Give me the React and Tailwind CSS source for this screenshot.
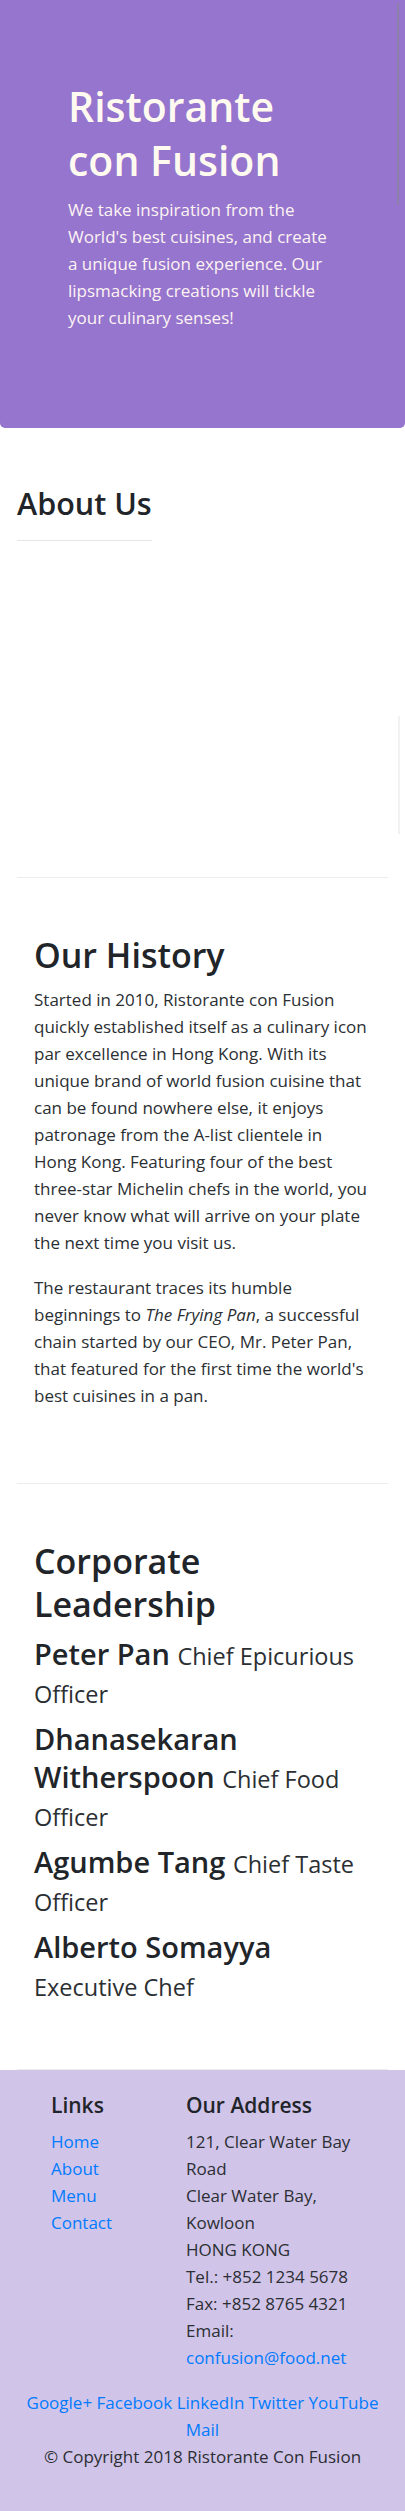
const leaders = [
  { name: 'Peter Pan', title: 'Chief Epicurious Officer' },
  { name: 'Dhanasekaran Witherspoon', title: 'Chief Food Officer' },
  { name: 'Agumbe Tang', title: 'Chief Taste Officer' },
  { name: 'Alberto Somayya', title: 'Executive Chef' },
];

export default function App() {
  return (
    <div className="bg-white text-[#212529]" style={{ fontFamily: '"Open Sans", sans-serif' }}>
      {/* Jumbotron */}
      <div className="relative bg-[#9575cd] rounded-b-[5px] px-[68px] pt-[79px] pb-[79px] text-[#fffaf0]">
        <h1 className="text-[41px] leading-[54px] font-semibold mb-[9px]">Ristorante con Fusion</h1>
        <p className="text-[17px] leading-[27px] mb-[18px] text-[#fdf3f3]">
          We take inspiration from the World's best cuisines, and create a unique fusion experience. Our lipsmacking creations will tickle your culinary senses!
        </p>
        <div className="absolute right-[6px] top-[3px] h-[202px] w-[2px] bg-[#8c80a8]" />
      </div>

      <div className="px-[17px]">
        {/* About Us row */}
        <div className="relative min-h-[450px] pt-[56px] pb-[56px] border-b border-[#ececec]">
          <div className="w-fit">
            <h3 className="text-[30.5px] leading-[38px] font-semibold mb-[18px] whitespace-nowrap">About Us</h3>
            <hr className="border-t border-[#e6e6e6]" />
          </div>
          <div className="absolute right-[-12px] top-[288px] h-[118px] w-[2px] bg-[#f2f2f2]" />
        </div>

        {/* Our History */}
        <div className="pt-[56px] pb-[56px] px-[17px] border-b border-[#ececec]">
          <h2 className="text-[34px] leading-[43px] font-semibold mb-[9px]">Our History</h2>
          <p className="text-[17px] leading-[27px] mb-[18px] text-[#2b2f33] whitespace-nowrap">
            Started in 2010, Ristorante con Fusion<br />
            quickly established itself as a culinary icon<br />
            par excellence in Hong Kong. With its<br />
            unique brand of world fusion cuisine that<br />
            can be found nowhere else, it enjoys<br />
            patronage from the A-list clientele in<br />
            Hong Kong. Featuring four of the best<br />
            three-star Michelin chefs in the world, you<br />
            never know what will arrive on your plate<br />
            the next time you visit us.
          </p>
          <p className="text-[17px] leading-[27px] mb-[18px] text-[#2b2f33] whitespace-nowrap">
            The restaurant traces its humble<br />
            beginnings to <em>The Frying Pan</em>, a successful<br />
            chain started by our CEO, Mr. Peter Pan,<br />
            that featured for the first time the world's<br />
            best cuisines in a pan.
          </p>
        </div>

        {/* Corporate Leadership */}
        <div className="pt-[56px] pb-[56px] px-[17px] border-b border-[#ececec]">
          <h2 className="text-[34px] leading-[43px] font-semibold mb-[9px]">Corporate Leadership</h2>
          {leaders.map((l) => (
            <h3 key={l.name} className="text-[29px] leading-[38px] font-semibold mb-[9px]">
              {l.name} <small className="text-[23.5px] leading-[20px] font-normal text-[#2b2f33]">{l.title}</small>
            </h3>
          ))}
        </div>
      </div>

      {/* Footer */}
      <footer className="bg-[#d1c4e9] pt-[22px] pb-[23px] text-[17px] leading-[27px]">
        <div className="flex">
          <div className="ml-[34px] w-[135px] px-[17px]">
            <h5 className="text-[21px] leading-[27px] font-semibold mb-[9px]">Links</h5>
            <ul className="mb-[18px] text-[#007bff]">
              <li>Home</li>
              <li>About</li>
              <li>Menu</li>
              <li>Contact</li>
            </ul>
          </div>
          <div className="w-[236px] px-[17px]">
            <h5 className="text-[21px] leading-[27px] font-semibold mb-[9px]">Our Address</h5>
            <address className="not-italic mb-[18px] text-[#2b2f33]">
              121, Clear Water Bay<br />Road<br />
              Clear Water Bay,<br />Kowloon<br />
              HONG KONG<br />
              Tel.: +852 1234 5678<br />
              Fax: +852 8765 4321<br />
              Email:<br />
              <span className="text-[#007bff]">confusion@food.net</span>
            </address>
          </div>
        </div>
        <div className="text-center text-[#007bff] px-[17px]">
          Google+ Facebook LinkedIn Twitter YouTube<br />Mail
        </div>
        <p className="text-center mb-[18px] text-[#2b2f33]">© Copyright 2018 Ristorante Con Fusion</p>
      </footer>
    </div>
  );
}
